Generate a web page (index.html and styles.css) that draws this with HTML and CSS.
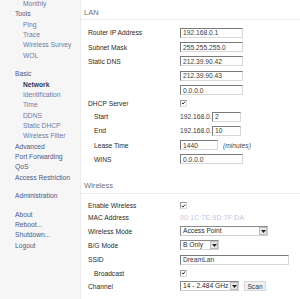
FILE: index.html
```html
<!DOCTYPE html>
<html lang="en">
<head>
  <meta charset="UTF-8">
  <title>Basic Network</title>
  <link rel="stylesheet" href="styles.css">
</head>
<body>
  <div class="page">
    <div class="menu">
      <div class="sub">Monthly</div>
      <div class="top">Tools</div>
      <div class="sub">Ping</div>
      <div class="sub">Trace</div>
      <div class="sub">Wireless Survey</div>
      <div class="sub">WOL</div>
      <div class="top gap">Basic</div>
      <div class="sub active">Network</div>
      <div class="sub">Identification</div>
      <div class="sub">Time</div>
      <div class="sub">DDNS</div>
      <div class="sub">Static DHCP</div>
      <div class="sub">Wireless Filter</div>
      <div class="top">Advanced</div>
      <div class="top">Port Forwarding</div>
      <div class="top">QoS</div>
      <div class="top">Access Restriction</div>
      <div class="top gap">Administration</div>
      <div class="top gap">About</div>
      <div class="top">Reboot...</div>
      <div class="top">Shutdown...</div>
      <div class="top">Logout</div>
    </div>

    <div class="content">
      <div class="section-title">LAN</div>
      <div class="rows">
        <div class="row"><span class="label">Router IP Address</span><input class="field" value="192.168.0.1"></div>
        <div class="row"><span class="label">Subnet Mask</span><input class="field" value="255.255.255.0"></div>
        <div class="row"><span class="label">Static DNS</span><input class="field" value="212.39.90.42"></div>
        <div class="row"><span class="label"></span><input class="field" value="212.39.90.43"></div>
        <div class="row"><span class="label"></span><input class="field" value="0.0.0.0"></div>
        <div class="row short"><span class="label">DHCP Server</span><span class="check"><svg width="7" height="7" viewBox="0 0 7 7"><path d="M1.2 3.2 L2.8 5 L5.8 1.4" fill="none" stroke="#222" stroke-width="1.3"/></svg></span></div>
        <div class="row"><span class="label indent">Start</span><span class="prefix">192.168.0.</span><input class="field tiny" value="2"></div>
        <div class="row"><span class="label indent">End</span><span class="prefix">192.168.0.</span><input class="field tiny" value="10"></div>
        <div class="row"><span class="label indent">Lease Time</span><input class="field lease" value="1440"><span class="note">(minutes)</span></div>
        <div class="row"><span class="label indent">WINS</span><input class="field" value="0.0.0.0"></div>
      </div>

      <div class="section-title second">Wireless</div>
      <div class="rows">
        <div class="row short"><span class="label">Enable Wireless</span><span class="check"><svg width="7" height="7" viewBox="0 0 7 7"><path d="M1.2 3.2 L2.8 5 L5.8 1.4" fill="none" stroke="#222" stroke-width="1.3"/></svg></span></div>
        <div class="row short"><span class="label">MAC Address</span><span class="mac">00:1C:7E:9D:7F:DA</span></div>
        <div class="row"><span class="label">Wireless Mode</span>
          <div class="select mode"><span class="select-text">Access Point</span><span class="arrow"><svg width="5" height="3" viewBox="0 0 5 3"><path d="M0 0 H5 L2.5 3 Z" fill="#222"/></svg></span></div>
        </div>
        <div class="row"><span class="label">B/G Mode</span>
          <div class="select bg"><span class="select-text">B Only</span><span class="arrow"><svg width="5" height="3" viewBox="0 0 5 3"><path d="M0 0 H5 L2.5 3 Z" fill="#222"/></svg></span></div>
        </div>
        <div class="row"><span class="label">SSID</span><input class="field wide" value="DreamLan"></div>
        <div class="row short"><span class="label indent">Broadcast</span><span class="check"><svg width="7" height="7" viewBox="0 0 7 7"><path d="M1.2 3.2 L2.8 5 L5.8 1.4" fill="none" stroke="#222" stroke-width="1.3"/></svg></span></div>
        <div class="row"><span class="label">Channel</span>
          <div class="select channel"><span class="select-text">14 - 2.484 GHz</span><span class="arrow"><svg width="5" height="3" viewBox="0 0 5 3"><path d="M0 0 H5 L2.5 3 Z" fill="#222"/></svg></span></div>
          <button class="scan">Scan</button>
        </div>
      </div>
    </div>
  </div>
</body>
</html>
```

FILE: styles.css
```css
body {
  margin: 0;
  font-family: "Liberation Sans", Arial, sans-serif;
  font-size: 6.7px;
  background-color: #fff;
}
.page {
  display: flex;
  width: 300px;
  height: 299px;
  overflow: hidden;
}
.menu {
  width: 80px;
  flex-shrink: 0;
  background-color: #f6f6f7;
  border-right: 1px solid #ececec;
  margin-top: -1px;
}
.menu div {
  line-height: 10.35px;
  white-space: nowrap;
}
.menu .top {
  padding-left: 15px;
  color: #4a5884;
}
.menu .sub {
  padding-left: 23px;
  color: #6c7aa6;
}
.menu .gap {
  margin-top: 8.2px;
}
.menu .active {
  font-weight: bold;
  color: #2c3960;
}
.content {
  flex: 1;
}
.section-title {
  font-size: 7.6px;
  line-height: 10px;
  padding: 7.5px 0 1.5px 3px;
  color: #707070;
  border-bottom: 1px solid #ededed;
}
.section-title.second {
  margin-top: 7.3px;
}
.rows {
  margin-top: 5.75px;
}
.row {
  display: flex;
  align-items: center;
  height: 14.3px;
  padding-left: 7px;
  color: #2a2a2a;
  white-space: nowrap;
}
.row.short {
  height: 12.2px;
}
.label {
  width: 92px;
  flex-shrink: 0;
}
.label.indent {
  padding-left: 6px;
  width: 86px;
}
.field {
  box-sizing: border-box;
  width: 63px;
  height: 10px;
  padding: 0 0 0 2px;
  margin: 0;
  font-family: "Liberation Sans", Arial, sans-serif;
  font-size: 6.7px;
  color: #3a3a3a;
  background: #fff;
  border-style: solid;
  border-width: 1px;
  border-color: #7a7a7a #d8d8d8 #d8d8d8 #7a7a7a;
  outline: none;
}
.field.tiny {
  width: 29px;
}
.field.lease {
  width: 38px;
}
.field.wide {
  width: 109px;
}
.prefix {
  color: #3a3a3a;
  margin-right: 0.5px;
}
.note {
  font-style: italic;
  color: #4a4a4a;
  margin-left: 5px;
}
.check {
  box-sizing: border-box;
  width: 7px;
  height: 7px;
  display: flex;
  border: 1px solid #9a9a9a;
  border-right-color: #ddd;
  border-bottom-color: #ddd;
  background: #fff;
  align-items: center;
  justify-content: center;
}
.check svg {
  width: 6px;
  height: 6px;
}
.mac {
  color: #bcc5df;
  letter-spacing: 0.3px;
}
.select {
  box-sizing: border-box;
  display: flex;
  align-items: center;
  height: 10px;
  border: 1px solid #8a8a8a;
  border-right-color: #cfcfcf;
  border-bottom-color: #cfcfcf;
  background: #fff;
  color: #2a2a2a;
}
.select-text {
  flex: 1;
  padding-left: 2px;
  line-height: 8px;
}
.arrow {
  box-sizing: border-box;
  width: 8px;
  height: 8px;
  display: flex;
  align-items: center;
  justify-content: center;
  background: #e8e8e8;
  border: 1px solid #bcbcbc;
}
.select.mode {
  width: 88px;
}
.select.bg {
  width: 39px;
}
.select.channel {
  width: 59px;
}
.scan {
  box-sizing: border-box;
  margin-left: 5px;
  height: 10px;
  width: 22px;
  padding: 0;
  font-family: "Liberation Sans", Arial, sans-serif;
  font-size: 6.7px;
  color: #333;
  background: #f1f1f1;
  border: 1px solid #d6d6d6;
}
```
